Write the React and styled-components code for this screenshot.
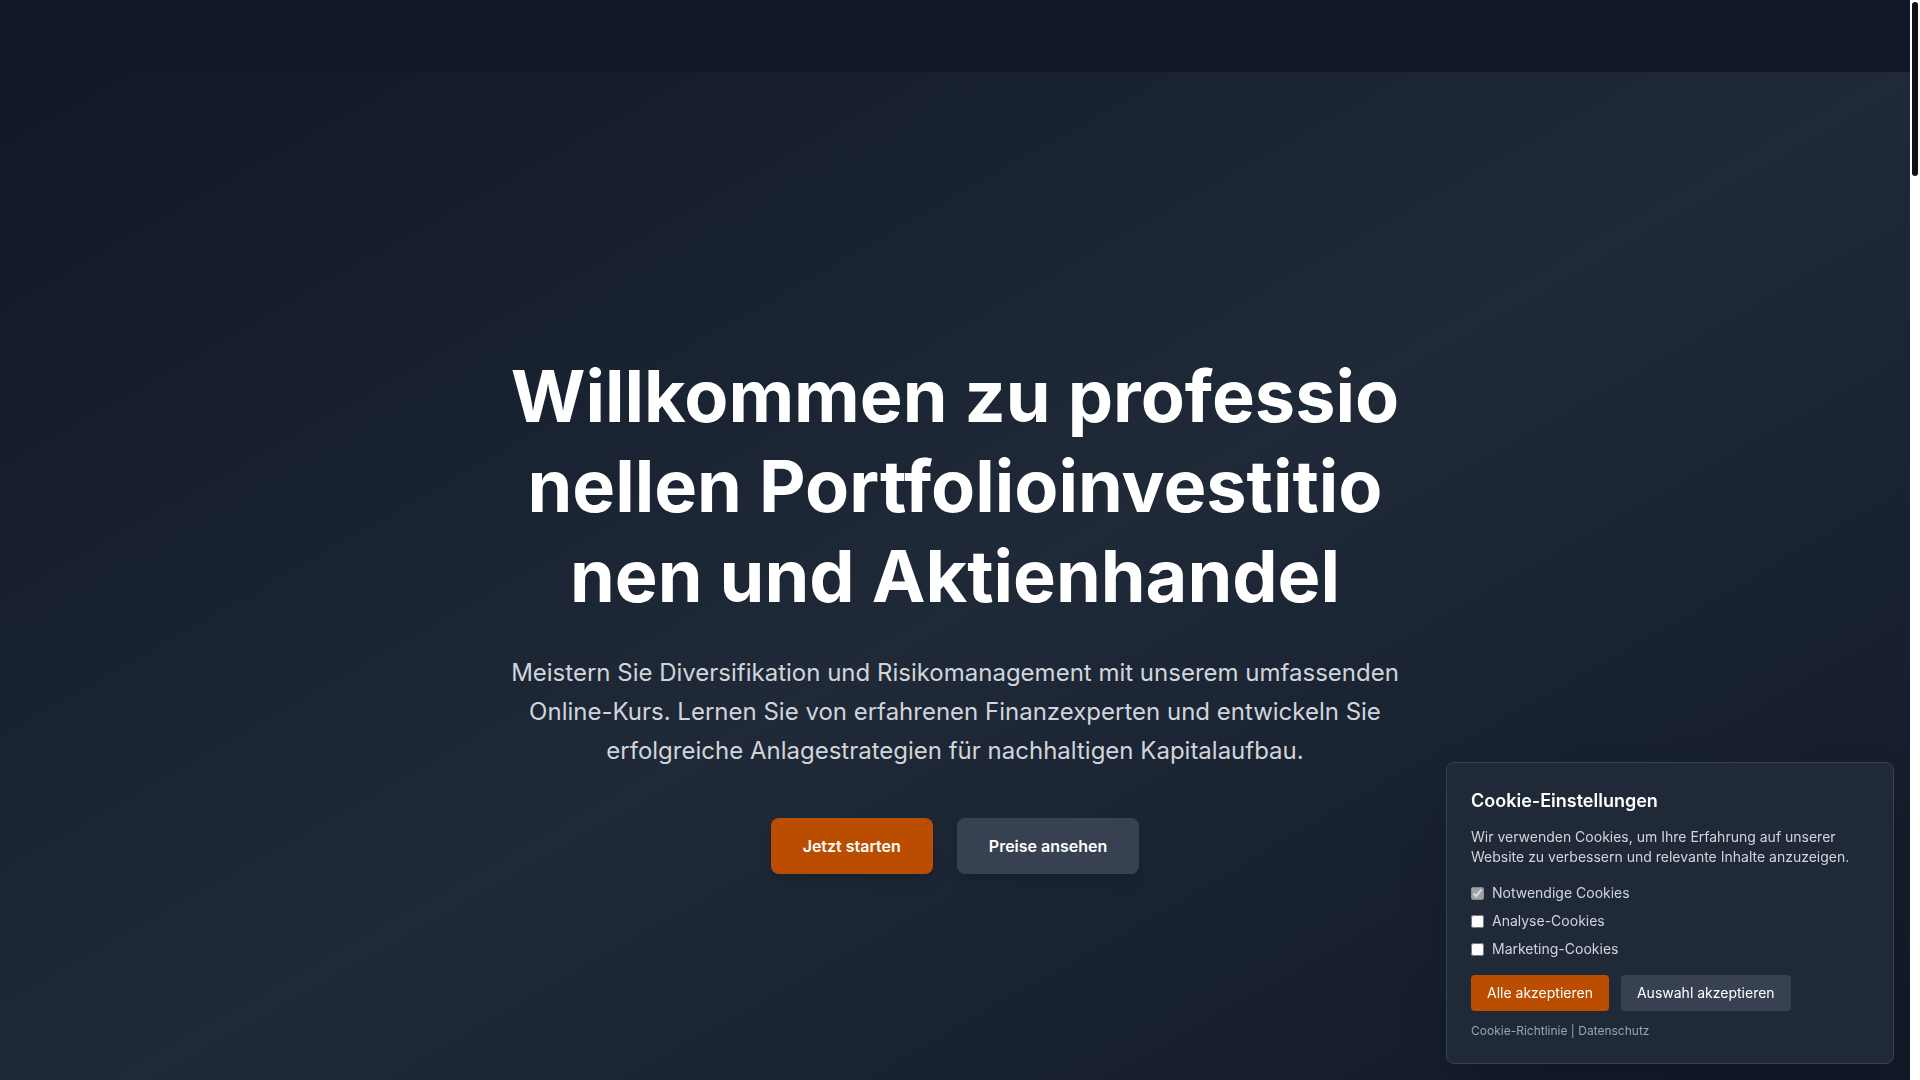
import React, { useState } from "react";
import styled, { createGlobalStyle } from "styled-components";

const GlobalStyle = createGlobalStyle`
  * {
    box-sizing: border-box;
    margin: 0;
    padding: 0;
  }
  body {
    font-family: Inter, "Noto Sans", sans-serif;
    background: #111827;
    color: #fff;
    padding-right: 10px;
    overflow: hidden;
  }
`;

// the page in the reference shows a thin light scrollbar on the right
const ScrollTrack = styled.div`
  position: fixed;
  top: 0;
  right: 0;
  width: 10px;
  height: 100vh;
  background: #fff;
  z-index: 100;
`;

const ScrollThumb = styled.div`
  margin: 2px;
  height: 174px;
  background: #111;
  border-radius: 3px;
`;

const Header = styled.header`
  height: 72px;
  background: #111827;
`;

const Hero = styled.section`
  min-height: 100vh;
  display: flex;
  align-items: center;
  justify-content: center;
  padding: 0 16px;
  background: linear-gradient(to bottom right, #111827, #1f2937, #111827);
`;

const HeroInner = styled.div`
  max-width: 896px;
  width: 100%;
  text-align: center;
`;

const Title = styled.h1`
  font-size: 72px;
  line-height: 1.25;
  font-weight: 700;
  color: #fff;
  word-break: break-all;
  margin-bottom: 32px;
`;

const Lead = styled.p`
  font-size: 24px;
  line-height: 1.625;
  color: #d1d5db;
  margin-bottom: 48px;
`;

const ButtonRow = styled.div`
  display: flex;
  justify-content: center;
  gap: 24px;
`;

const HeroButton = styled.button`
  font-family: inherit;
  font-size: 16px;
  line-height: 24px;
  font-weight: 600;
  color: #fff;
  padding: 16px 32px;
  border: none;
  border-radius: 8px;
  cursor: pointer;
  background: ${({ $primary }) => ($primary ? "#bb4d00" : "#374151")};
  box-shadow: 0 10px 15px -3px rgba(0, 0, 0, 0.1),
    0 4px 6px -4px rgba(0, 0, 0, 0.1);
`;

const CookiePanel = styled.div`
  position: fixed;
  right: 26px;
  bottom: 16px;
  z-index: 50;
  width: 448px;
  padding: 24px;
  background: #1f2937;
  border: 1px solid #374151;
  border-radius: 8px;
  box-shadow: 0 25px 50px -12px rgba(0, 0, 0, 0.25);
`;

const CookieTitle = styled.h3`
  font-size: 18px;
  line-height: 28px;
  font-weight: 600;
  color: #fff;
  margin-bottom: 12px;
`;

const CookieText = styled.p`
  font-size: 14px;
  line-height: 20px;
  color: #d1d5db;
  margin-bottom: 16px;
`;

const OptionList = styled.div`
  display: flex;
  flex-direction: column;
  gap: 8px;
  margin-bottom: 16px;
`;

const Option = styled.label`
  display: flex;
  align-items: center;
  font-size: 14px;
  line-height: 20px;
  color: #d1d5db;

  input {
    margin-right: 8px;
    width: 13px;
    height: 13px;
  }
`;

const CookieButtons = styled.div`
  display: flex;
  gap: 12px;
`;

const CookieButton = styled.button`
  font-family: inherit;
  font-size: 14px;
  line-height: 20px;
  font-weight: 400;
  color: #fff;
  padding: 8px 16px;
  border: none;
  border-radius: 4px;
  cursor: pointer;
  background: ${({ $primary }) => ($primary ? "#bb4d00" : "#374151")};
`;

const CookieLinks = styled.div`
  margin-top: 12px;
  font-size: 12px;
  line-height: 16px;
  color: #9ca3af;

  a {
    color: inherit;
    text-decoration: none;
  }
`;

function App() {
  const [analytics, setAnalytics] = useState(false);
  const [marketing, setMarketing] = useState(false);
  const [showCookies, setShowCookies] = useState(true);

  return (
    <>
      <GlobalStyle />
      <Header />
      <Hero>
        <HeroInner>
          <Title>
            Willkommen zu professionellen Portfolioinvestitionen und
            Aktienhandel
          </Title>
          <Lead>
            Meistern Sie Diversifikation und Risikomanagement mit unserem
            umfassenden Online-Kurs. Lernen Sie von erfahrenen Finanzexperten
            und entwickeln Sie erfolgreiche Anlagestrategien für nachhaltigen
            Kapitalaufbau.
          </Lead>
          <ButtonRow>
            <HeroButton $primary>Jetzt starten</HeroButton>
            <HeroButton>Preise ansehen</HeroButton>
          </ButtonRow>
        </HeroInner>
      </Hero>

      {showCookies && (
        <CookiePanel>
          <CookieTitle>Cookie-Einstellungen</CookieTitle>
          <CookieText>
            Wir verwenden Cookies, um Ihre Erfahrung auf unserer Website zu
            verbessern und relevante Inhalte anzuzeigen.
          </CookieText>
          <OptionList>
            <Option>
              <input type="checkbox" checked disabled readOnly />
              Notwendige Cookies
            </Option>
            <Option>
              <input
                type="checkbox"
                checked={analytics}
                onChange={() => setAnalytics(!analytics)}
              />
              Analyse-Cookies
            </Option>
            <Option>
              <input
                type="checkbox"
                checked={marketing}
                onChange={() => setMarketing(!marketing)}
              />
              Marketing-Cookies
            </Option>
          </OptionList>
          <CookieButtons>
            <CookieButton $primary onClick={() => setShowCookies(false)}>
              Alle akzeptieren
            </CookieButton>
            <CookieButton onClick={() => setShowCookies(false)}>
              Auswahl akzeptieren
            </CookieButton>
          </CookieButtons>
          <CookieLinks>
            <a href="#">Cookie-Richtlinie</a> | <a href="#">Datenschutz</a>
          </CookieLinks>
        </CookiePanel>
      )}

      <ScrollTrack>
        <ScrollThumb />
      </ScrollTrack>
    </>
  );
}

export default App;
